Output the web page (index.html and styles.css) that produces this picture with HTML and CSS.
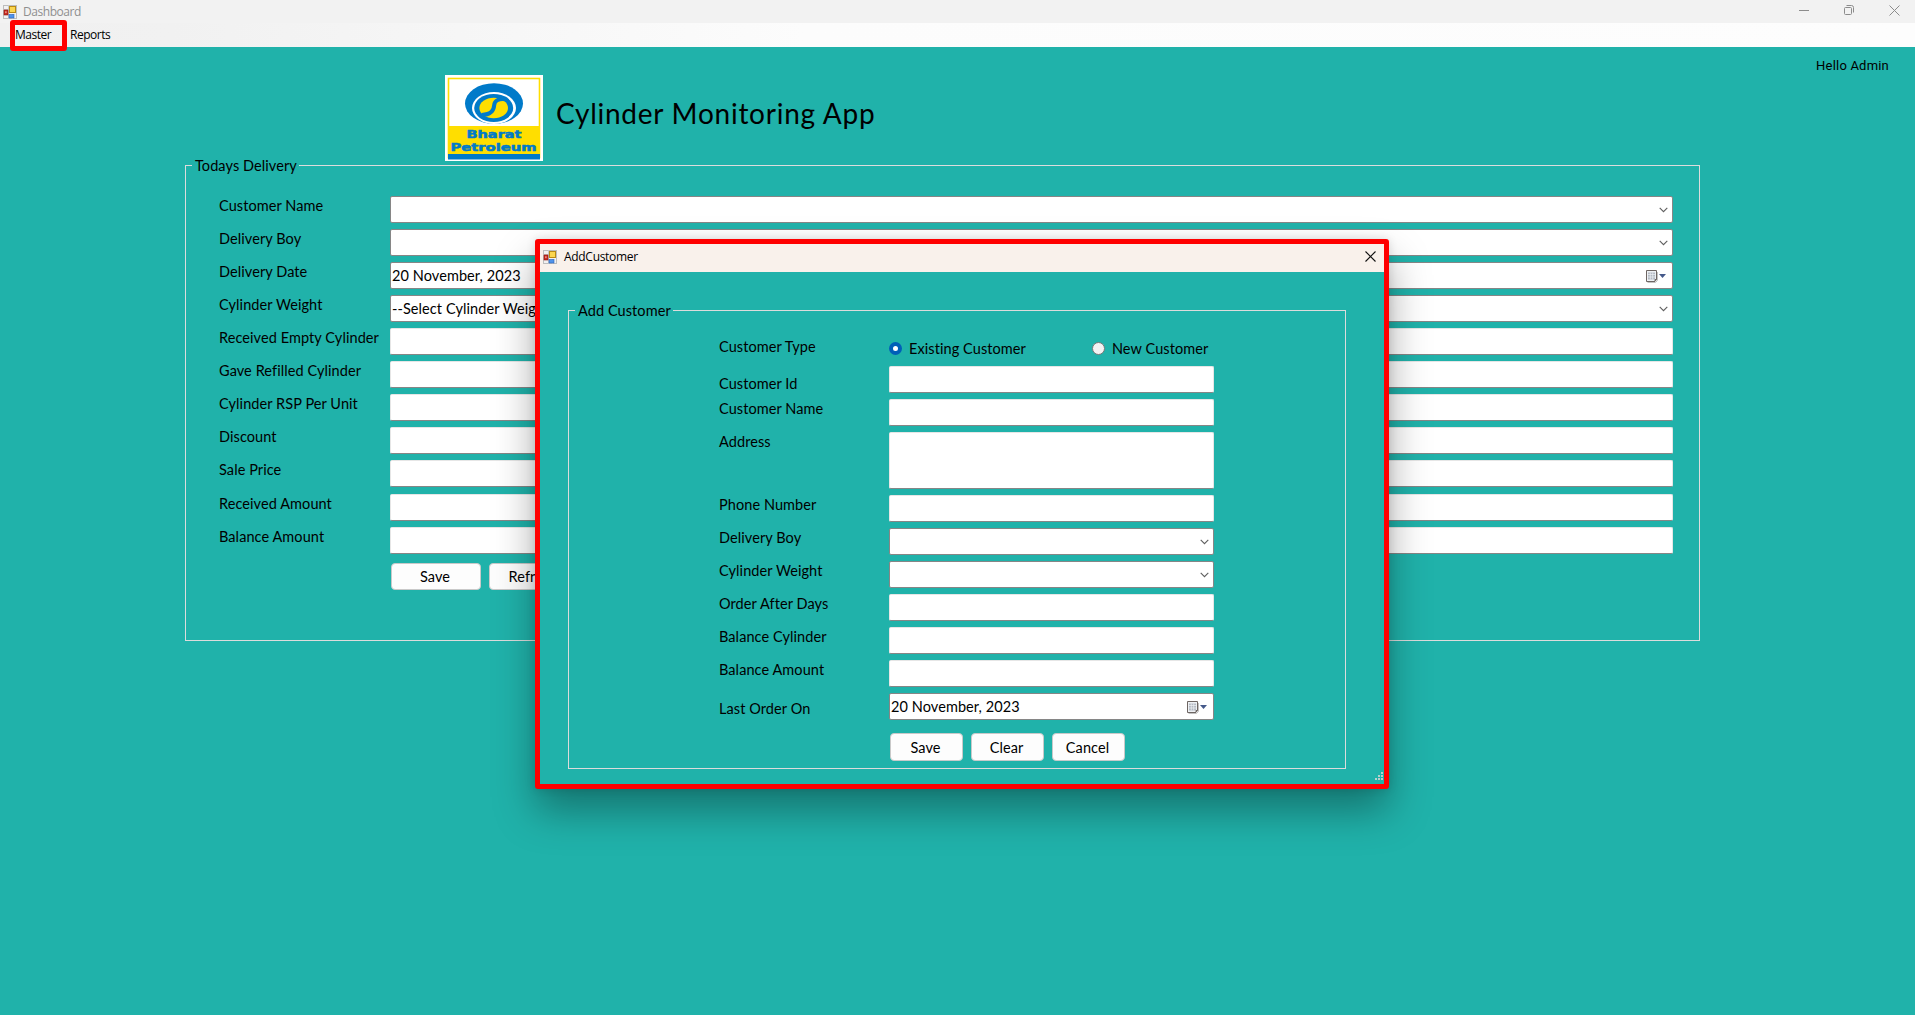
FILE: index.html
```html
<!DOCTYPE html>
<html lang="en">
<head>
<meta charset="utf-8">
<title>Dashboard</title>
<link rel="stylesheet" href="styles.css">
</head>
<body>
<svg width="0" height="0" class="defs">
  <symbol id="form-icon" viewBox="0 0 14 14">
    <rect x=".5" y=".5" width="13" height="13" fill="#f1f1f1" stroke="#bdbdbd"/>
    <path d="M5.5 0v14M0 4.500h6M9.500 9v5" stroke="#c9c9c9"/>
    <rect x="6.500" y="1.500" width="6" height="6" fill="#fbd64f" stroke="#b98a14"/>
    <rect x="1" y="5" width="4" height="5" fill="#c8281e" stroke="#8e1a14" stroke-width=".6"/>
    <rect x="2.300" y="6.300" width="1.200" height="1.800" fill="#f3b0a6"/>
    <rect x="6" y="9.500" width="5" height="3.500" fill="#4f93ea" stroke="#2c62b8" stroke-width=".6"/>
  </symbol>
  <symbol id="chevron" viewBox="0 0 9 6"><path d="M.7.9 4.500 4.700 8.300.9" fill="none" stroke="#5f5f5f" stroke-width="1.100"/></symbol>
  <symbol id="calendar" viewBox="0 0 21 13">
    <path d="M1.500 12.500h8l2-2V2" fill="none" stroke="#c2c2c2"/>
    <path d="M.5.5h10v9l-1.500 2h-8.500z" fill="#eef1f4" stroke="#6e6663"/>
    <rect x="2" y="2.500" width="7" height="7" fill="#b4bac4"/>
    <path d="M2 4.500h7M2 7h7M4.300 2.500v7M6.700 2.500v7" stroke="#eef1f4" stroke-width=".7"/>
    <path d="M9 11v-1.500h1.500" fill="#6e6663" stroke="#6e6663"/>
    <path d="M13 4h7l-3.500 4z" fill="#44598a"/>
  </symbol>
</svg>

<header class="titlebar">
  <svg class="app-icon"><use href="#form-icon"/></svg>
  <span class="win-title">Dashboard</span>
  <div class="win-buttons">
    <svg width="10" height="10" viewBox="0 0 10 10"><path d="M0 5.500h10" stroke="#8c8c8c"/></svg>
    <svg width="10" height="10" viewBox="0 0 10 10" fill="none" stroke="#8c8c8c"><rect x=".5" y="2.500" width="7" height="7" rx="1"/><path d="M2.500.5h5a2 2 0 0 1 2 2v5"/></svg>
    <svg width="11" height="11" viewBox="0 0 11 11"><path d="M.5.5l10 10M10.500.5l-10 10" stroke="#8c8c8c"/></svg>
  </div>
</header>
<nav class="menu"><span class="menu-master">Master</span><span>Reports</span></nav>
<div class="highlight"></div>

<main class="desk">
  <div class="hello">Hello Admin</div>
  <div class="brand">
    <svg class="logo" width="98" height="86" viewBox="0 0 98 86">
      <rect width="98" height="86" fill="#fff"/>
      <rect x="3.500" y="3.500" width="91" height="79" fill="#fff" stroke="#ffde00" stroke-width="1.600"/>
      <rect x="3" y="51" width="92" height="28" fill="#ffde00"/>
      <rect x="3" y="79" width="92" height="5.500" fill="#007ac9"/>
      <ellipse cx="49" cy="28.500" rx="29" ry="20.300" fill="#007ac9"/>
      <ellipse cx="49" cy="33" rx="22" ry="16" fill="#fff"/>
      <ellipse cx="48.700" cy="33" rx="19.500" ry="14" fill="#007ac9"/>
      <ellipse cx="48.700" cy="33" rx="14.300" ry="10.300" fill="#ffde00"/>
      <path d="M62 24.500c-8-1.500-12.500 1-12.800 5.500s-2 9.500-12.700 10" fill="none" stroke="#007ac9" stroke-width="4"/>
      <text x="49" y="63" text-anchor="middle" textLength="55" lengthAdjust="spacingAndGlyphs">Bharat</text>
      <text x="48.500" y="76" text-anchor="middle" textLength="86" lengthAdjust="spacingAndGlyphs">Petroleum</text>
    </svg>
    <h1>Cylinder Monitoring App</h1>
  </div>

  <section class="group delivery">
    <h2>Todays Delivery</h2>
    <div class="rows">
      <div class="row"><label>Customer Name</label><div class="field combo"><svg class="chev"><use href="#chevron"/></svg></div></div>
      <div class="row"><label>Delivery Boy</label><div class="field combo"><svg class="chev"><use href="#chevron"/></svg></div></div>
      <div class="row"><label>Delivery Date</label><div class="field combo"><span class="date">20 November, 2023</span><svg class="cal"><use href="#calendar"/></svg></div></div>
      <div class="row"><label>Cylinder Weight</label><div class="field combo"><span>--Select Cylinder Weight--</span><svg class="chev"><use href="#chevron"/></svg></div></div>
      <div class="row"><label>Received Empty Cylinder</label><div class="field"></div></div>
      <div class="row"><label>Gave Refilled Cylinder</label><div class="field"></div></div>
      <div class="row"><label>Cylinder RSP Per Unit</label><div class="field"></div></div>
      <div class="row"><label>Discount</label><div class="field"></div></div>
      <div class="row late"><label>Sale Price</label><div class="field"></div></div>
      <div class="row"><label>Received Amount</label><div class="field"></div></div>
      <div class="row"><label>Balance Amount</label><div class="field"></div></div>
    </div>
    <div class="buttons"><button>Save</button><button>Refresh</button></div>
  </section>
</main>

<div class="dialog">
  <div class="dialog-bar">
    <svg class="app-icon"><use href="#form-icon"/></svg>
    <span class="win-title">AddCustomer</span>
    <svg class="close" width="11" height="11" viewBox="0 0 11 11"><path d="M.5.5l10 10M10.500.5l-10 10" stroke="#111" stroke-width="1.100"/></svg>
  </div>
  <section class="group customer">
    <h2>Add Customer</h2>
    <div class="rows">
      <div class="row type"><label>Customer Type</label>
        <div class="radios"><span class="radio on">Existing Customer</span><span class="radio">New Customer</span></div></div>
      <div class="row low"><label>Customer Id</label><div class="field"></div></div>
      <div class="row"><label>Customer Name</label><div class="field"></div></div>
      <div class="row tall"><label>Address</label><div class="field"></div></div>
      <div class="row"><label>Phone Number</label><div class="field"></div></div>
      <div class="row"><label>Delivery Boy</label><div class="field combo"><svg class="chev"><use href="#chevron"/></svg></div></div>
      <div class="row"><label>Cylinder Weight</label><div class="field combo"><svg class="chev"><use href="#chevron"/></svg></div></div>
      <div class="row"><label>Order After Days</label><div class="field"></div></div>
      <div class="row"><label>Balance Cylinder</label><div class="field"></div></div>
      <div class="row"><label>Balance Amount</label><div class="field"></div></div>
      <div class="row last"><label>Last Order On</label><div class="field combo"><span class="date">20 November, 2023</span><svg class="cal"><use href="#calendar"/></svg></div></div>
    </div>
    <div class="buttons"><button>Save</button><button>Clear</button><button>Cancel</button></div>
  </section>
  <svg class="grip" width="8" height="8" viewBox="0 0 8 8" fill="#b9cfcc"><path d="M6 0h2v2H6zM3 3h2v2H3zM6 3h2v2H6zM0 6h2v2H0zM3 6h2v2H3zM6 6h2v2H6z"/></svg>
</div>
</body>
</html>
```
FILE: styles.css
```css
*, *::before { box-sizing: border-box; }

body {
  margin: 0;
  width: 1915px;
  height: 1015px;
  overflow: hidden;
  display: flex;
  flex-direction: column;
  position: relative;
  background: #20b2aa;
  color: #000;
  font: 14.5px/20px Lato, "Open Sans", sans-serif;
  letter-spacing: .08px;
}

.defs { position: absolute; }

.titlebar {
  height: 23px;
  flex: none;
  display: flex;
  align-items: center;
  padding: 0 15px 0 3px;
  background: #f2f2f2;
}
.app-icon { width: 14px; height: 14px; flex: none; }
.win-title {
  font: 12px/16px "Open Sans", sans-serif;
  letter-spacing: -.45px;
  margin-left: 6px;
}
.titlebar .win-title { color: #8f8f8f; }
.win-buttons { margin-left: auto; display: flex; gap: 35px; padding-bottom: 3px; }

.menu {
  height: 24px;
  flex: none;
  display: flex;
  gap: 19px;
  padding: 3px 0 0 15px;
  background: linear-gradient(90deg, #f0f0f0, #f1f1f1 9%, #fcfcfc 42%, #fdfdfd);
  font: 12px/18px "Open Sans", sans-serif;
  letter-spacing: -.5px;
}
.highlight {
  position: absolute;
  left: 10px;
  top: 20px;
  width: 57px;
  height: 31px;
  border: 5px solid #f00;
  border-radius: 3px;
}

.desk { flex: 1; display: flex; flex-direction: column; }
.hello {
  height: 28px;
  padding: 10px 26px 0 0;
  text-align: right;
  font: 13px/18px Roboto, sans-serif;
  letter-spacing: .2px;
}
.brand { display: flex; height: 86px; margin-left: 445px; }
.logo text {
  font: 900 10px "DejaVu Sans", sans-serif;
  fill: #007ac9;
  stroke: #007ac9;
  stroke-width: .5px;
  letter-spacing: 0;
}
h1 {
  margin: 18px 0 0 13px;
  font: 28px/40px Lato, sans-serif;
  letter-spacing: .75px;
}

.group { border: 1px solid #dcdcdc; }
h2 {
  width: max-content;
  height: 20px;
  margin: -10px 0 0 6px;
  padding: 0 2px 0 3px;
  background: #20b2aa;
  font: inherit;
}
.delivery { width: 1515px; height: 476px; margin: 4px 0 0 185px; padding-right: 26px; }
.rows { display: flex; flex-direction: column; gap: 6px; }
.row { display: flex; height: 27px; }
.row label { flex: none; white-space: nowrap; }
.delivery .rows { margin-top: 20px; padding-left: 33px; }
.delivery label { width: 171px; }
.late { margin-bottom: 1px; }

.field {
  flex: 1;
  background: #fff;
  border: 1px solid #e6e6e6;
  border-bottom-color: #868686;
  border-radius: 2px;
  display: flex;
  align-items: center;
  min-width: 0;
  white-space: nowrap;
  padding: 1px 0 0 1px;
}
.combo { border-color: #868686; }
.chev { width: 9px; height: 6px; margin: 0 4px 0 auto; }
.cal { width: 21px; height: 13px; margin: 0 5px 0 auto; }

.buttons { display: flex; gap: 8px; }
button {
  height: 27px;
  padding: 1px 2px 0 0;
  font: inherit;
  letter-spacing: inherit;
  color: #000;
  background: #fdfdfd;
  border: 1px solid #c9c9c9;
  border-radius: 4px;
}
.delivery .buttons { margin: 9px 0 0 205px; }
.delivery button { width: 90px; }

.dialog {
  position: absolute;
  left: 535px;
  top: 239px;
  width: 854px;
  height: 550px;
  border: 5px solid #f00;
  border-radius: 3px;
  background: #20b2aa;
  box-shadow: 0 22px 40px rgba(0, 0, 0, .34), 0 0 10px rgba(0, 0, 0, .12);
}
.dialog-bar {
  height: 28px;
  display: flex;
  align-items: center;
  padding: 0 8px 3px 3px;
  background: #f9f1eb;
}
.dialog .win-title { margin: 1px 0 0 7px; letter-spacing: -.3px; }
.close { margin-left: auto; }
.customer { width: 778px; height: 459px; margin: 38px 0 0 28px; }
.customer .rows { margin-top: 15px; padding: 0 131px 0 150px; }
.customer label { width: 170px; }
.customer .type { height: 24px; }
.customer .type label { padding-top: 1px; }
.customer .low label { padding-top: 8px; }
.tall { height: 57px; }
.customer .last label { padding-top: 6px; }
.radios { display: flex; gap: 66px; margin-top: 2px; }
.radio { display: flex; align-items: center; white-space: nowrap; height: 22px; }
.radio::before {
  content: "";
  width: 13px;
  height: 13px;
  margin: -2px 7px 0 0;
  border: 1px solid #777;
  border-radius: 50%;
  background: #f3f3f3;
}
.radio.on::before { border: 4px solid #005fb8; background: #fff; }
.customer .buttons { margin: 13px 0 0 321px; }
.customer button { width: 73px; height: 28px; }
.grip { position: absolute; right: 1px; bottom: 4px; }
```
